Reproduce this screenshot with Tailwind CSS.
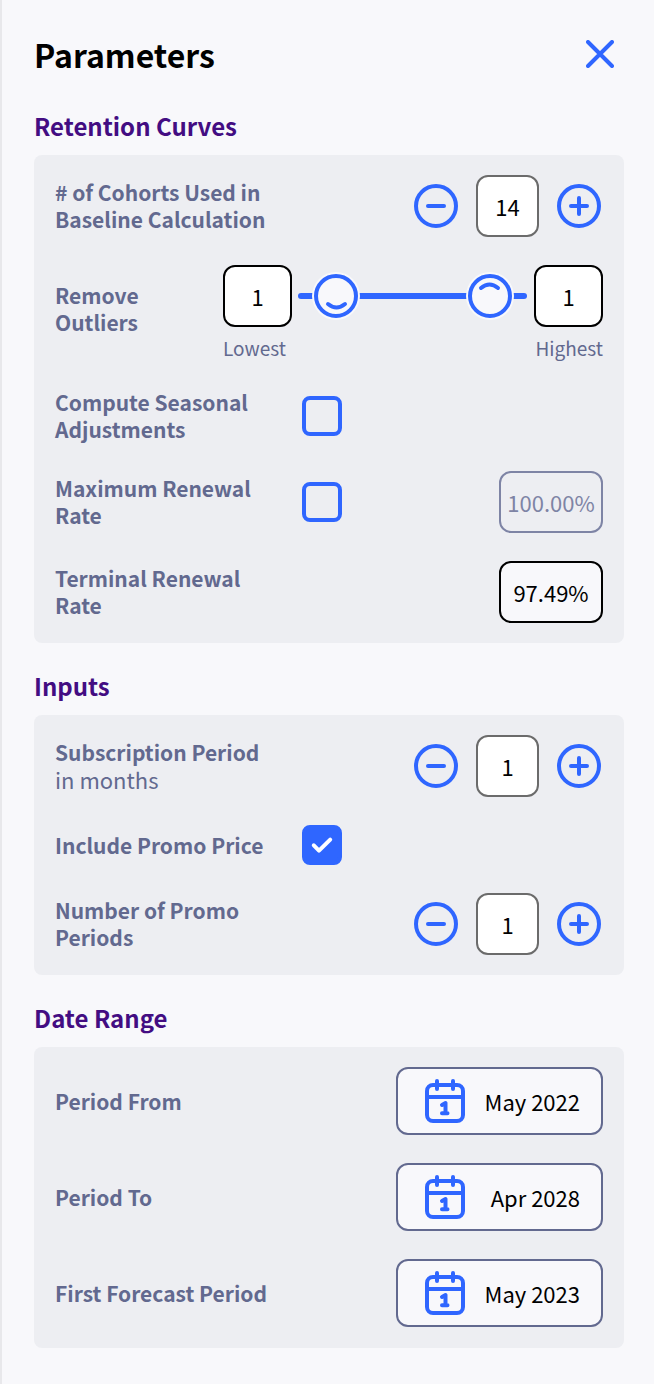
<!DOCTYPE html>
<html lang="en">
<head>
    <meta charset="UTF-8">
    <meta name="viewport" content="width=device-width, initial-scale=1.0">
    <title>Parameters</title>
    <script src="https://cdn.jsdelivr.net/npm/@tailwindcss/browser@4"></script>
</head>
<body class="bg-[#f8f8fb] font-['Noto_Sans_CJK_SC','Noto_Sans',sans-serif] text-[21px] leading-[27px] text-black">
    <!-- shared icons -->
    <svg class="hidden">
        <symbol id="minus" viewBox="0 0 44 44" fill="none" stroke="currentColor" stroke-width="4" stroke-linecap="round">
            <circle cx="22" cy="22" r="20"/>
            <path d="M14 22H30"/>
        </symbol>
        <symbol id="plus" viewBox="0 0 44 44" fill="none" stroke="currentColor" stroke-width="4" stroke-linecap="round">
            <circle cx="22" cy="22" r="20"/>
            <path d="M14 22H30M22 14V30"/>
        </symbol>
        <symbol id="check" viewBox="0 0 40 40" fill="none" stroke="currentColor" stroke-width="4" stroke-linecap="round" stroke-linejoin="round">
            <path d="M11.8 20.3L17 25.6L28.2 14.6"/>
        </symbol>
        <symbol id="calendar" viewBox="0 0 40 44" fill="none" stroke="currentColor" stroke-width="4" stroke-linecap="round" stroke-linejoin="round">
            <rect x="2" y="6" width="36" height="36" rx="6"/>
            <path d="M2 18H38" stroke-linecap="butt"/>
            <path d="M12 2V10M28 2V10"/>
            <path d="M17 26L20.5 24V34M17 34.3H22.5"/>
        </symbol>
    </svg>

    <main class="min-h-screen border-l-2 border-[#e8e8eb] pt-8 pr-[30px] pb-8 pl-8">
        <header class="flex items-start justify-between pr-[10px] mb-8">
            <h1 class="text-[32px] leading-[44px] font-bold">Parameters</h1>
            <button type="button" aria-label="Close" class="mt-2 text-[#2f66ff]">
                <svg class="size-7" viewBox="0 0 28 28" fill="none" stroke="currentColor" stroke-width="4" stroke-linecap="round"><path d="M2 2L26 26M26 2L2 26"/></svg>
            </button>
        </header>

        <section class="mb-[25px]">
            <h2 class="mb-[11px] text-[24px] leading-[36px] font-bold text-[#430d82]">Retention Curves</h2>
            <div class="flex flex-col gap-7 rounded-lg bg-[#edeef2] px-[21px] py-5">
                <div class="flex items-center justify-between">
                    <label for="cohorts" class="w-[219px] font-bold text-[#62698f]"># of Cohorts Used in Baseline Calculation</label>
                    <div class="flex items-center gap-[18px] pr-[2px]">
                        <button type="button" aria-label="Decrease" data-step="-1" class="text-[#2f66ff]"><svg class="size-11"><use href="#minus"/></svg></button>
                        <input id="cohorts" type="text" value="14" class="h-[62px] w-[63px] rounded-xl border-2 border-[#6b6b6b] bg-white text-center text-[22px]">
                        <button type="button" aria-label="Increase" data-step="1" class="text-[#2f66ff]"><svg class="size-11"><use href="#plus"/></svg></button>
                    </div>
                </div>

                <div class="flex items-start justify-between">
                    <span class="w-[120px] pt-[17px] font-bold text-[#62698f]">Remove Outliers</span>
                    <div class="flex items-start gap-[6px]">
                        <div class="flex flex-col gap-2">
                            <input id="lowest" type="text" value="1" class="h-[62px] w-[69px] rounded-xl border-2 border-black bg-white text-center text-[22px]">
                            <label for="lowest" class="w-[69px] text-[19px] leading-[26px] text-[#62698f]">Lowest</label>
                        </div>
                        <div class="relative mt-[7px] h-12 w-[230px]">
                            <svg class="size-full" viewBox="0 0 230 48" fill="none" stroke="#2f66ff" stroke-width="4" stroke-linecap="round">
                                <path d="M3 24H226" stroke-width="6"/>
                                <circle cx="38" cy="24" r="24" fill="#f8f8fb" stroke="none"/>
                                <circle cx="38" cy="24" r="20"/>
                                <path d="M30 32Q38.5 39 47 32"/>
                                <circle cx="192" cy="24" r="24" fill="#f8f8fb" stroke="none"/>
                                <circle cx="192" cy="24" r="20"/>
                                <path d="M183 16Q191.5 9 200 16"/>
                            </svg>
                            <input type="range" min="0" max="10" value="1" aria-label="Lowest outliers" class="absolute inset-y-0 left-0 w-1/2 opacity-0">
                            <input type="range" min="0" max="10" value="9" aria-label="Highest outliers" class="absolute inset-y-0 right-0 w-1/2 opacity-0">
                        </div>
                        <div class="flex flex-col items-end gap-2">
                            <input id="highest" type="text" value="1" class="h-[62px] w-[69px] rounded-xl border-2 border-black bg-white text-center text-[22px]">
                            <label for="highest" class="text-[19px] leading-[26px] text-[#62698f]">Highest</label>
                        </div>
                    </div>
                </div>

                <div class="flex items-center gap-7">
                    <label for="seasonal" class="w-[219px] font-bold text-[#62698f]">Compute Seasonal Adjustments</label>
                    <div class="grid size-10">
                        <input id="seasonal" type="checkbox" class="peer col-start-1 row-start-1 size-10 appearance-none rounded-lg border-4 border-[#2f66ff] checked:bg-[#2f66ff]">
                        <svg class="pointer-events-none invisible col-start-1 row-start-1 size-10 text-white peer-checked:visible"><use href="#check"/></svg>
                    </div>
                </div>

                <div class="flex items-center gap-7">
                    <label for="max-on" class="w-[219px] font-bold text-[#62698f]">Maximum Renewal Rate</label>
                    <div class="grid size-10">
                        <input id="max-on" type="checkbox" class="peer col-start-1 row-start-1 size-10 appearance-none rounded-lg border-4 border-[#2f66ff] checked:bg-[#2f66ff]">
                        <svg class="pointer-events-none invisible col-start-1 row-start-1 size-10 text-white peer-checked:visible"><use href="#check"/></svg>
                    </div>
                    <input id="max-rate" type="text" value="100.00%" disabled aria-label="Maximum renewal rate value" class="ml-auto h-[62px] w-[104px] rounded-xl border-2 border-[#7e84a5] text-center text-[22px] text-[#7e84a5]">
                </div>

                <div class="flex items-center justify-between">
                    <label for="terminal" class="w-[219px] font-bold text-[#62698f]">Terminal Renewal Rate</label>
                    <input id="terminal" type="text" value="97.49%" class="h-[62px] w-[104px] rounded-xl border-2 border-black bg-[#f8f8fb] text-center text-[22px]">
                </div>
            </div>
        </section>

        <section class="mb-[25px]">
            <h2 class="mb-[11px] text-[24px] leading-[36px] font-bold text-[#430d82]">Inputs</h2>
            <div class="flex flex-col gap-7 rounded-lg bg-[#edeef2] px-[21px] py-5">
                <div class="flex items-center justify-between">
                    <label for="sub-period" class="w-[219px] font-bold text-[#62698f]">Subscription Period <span class="block text-[22px] font-normal">in months</span></label>
                    <div class="flex items-center gap-[18px] pr-[2px]">
                        <button type="button" aria-label="Decrease" data-step="-1" class="text-[#2f66ff]"><svg class="size-11"><use href="#minus"/></svg></button>
                        <input id="sub-period" type="text" value="1" class="h-[62px] w-[63px] rounded-xl border-2 border-[#6b6b6b] bg-white text-center text-[22px]">
                        <button type="button" aria-label="Increase" data-step="1" class="text-[#2f66ff]"><svg class="size-11"><use href="#plus"/></svg></button>
                    </div>
                </div>

                <div class="flex items-center gap-7">
                    <label for="promo" class="w-[219px] font-bold text-[#62698f]">Include Promo Price</label>
                    <div class="grid size-10">
                        <input id="promo" type="checkbox" checked class="peer col-start-1 row-start-1 size-10 appearance-none rounded-lg border-4 border-[#2f66ff] checked:bg-[#2f66ff]">
                        <svg class="pointer-events-none invisible col-start-1 row-start-1 size-10 text-white peer-checked:visible"><use href="#check"/></svg>
                    </div>
                </div>

                <div class="flex items-center justify-between">
                    <label for="promo-periods" class="w-[219px] font-bold text-[#62698f]">Number of Promo Periods</label>
                    <div class="flex items-center gap-[18px] pr-[2px]">
                        <button type="button" aria-label="Decrease" data-step="-1" class="text-[#2f66ff]"><svg class="size-11"><use href="#minus"/></svg></button>
                        <input id="promo-periods" type="text" value="1" class="h-[62px] w-[63px] rounded-xl border-2 border-[#6b6b6b] bg-white text-center text-[22px]">
                        <button type="button" aria-label="Increase" data-step="1" class="text-[#2f66ff]"><svg class="size-11"><use href="#plus"/></svg></button>
                    </div>
                </div>
            </div>
        </section>

        <section>
            <h2 class="mb-[11px] text-[24px] leading-[36px] font-bold text-[#430d82]">Date Range</h2>
            <div class="flex flex-col gap-7 rounded-lg bg-[#edeef2] px-[21px] pt-5 pb-[21px]">
                <div class="flex items-center justify-between">
                    <label for="from" class="font-bold text-[#62698f]">Period From</label>
                    <button id="from" type="button" class="flex h-[68px] w-[207px] items-center justify-between rounded-xl border-2 border-[#62698f] bg-[#f8f8fb] pr-[21px] pl-[27px] text-[22px]">
                        <svg class="h-11 w-10 text-[#2f66ff]"><use href="#calendar"/></svg>
                        <span>May 2022</span>
                    </button>
                </div>
                <div class="flex items-center justify-between">
                    <label for="to" class="font-bold text-[#62698f]">Period To</label>
                    <button id="to" type="button" class="flex h-[68px] w-[207px] items-center justify-between rounded-xl border-2 border-[#62698f] bg-[#f8f8fb] pr-[21px] pl-[27px] text-[22px]">
                        <svg class="h-11 w-10 text-[#2f66ff]"><use href="#calendar"/></svg>
                        <span>Apr 2028</span>
                    </button>
                </div>
                <div class="flex items-center justify-between">
                    <label for="forecast" class="font-bold text-[#62698f]">First Forecast Period</label>
                    <button id="forecast" type="button" class="flex h-[68px] w-[207px] items-center justify-between rounded-xl border-2 border-[#62698f] bg-[#f8f8fb] pr-[21px] pl-[27px] text-[22px]">
                        <svg class="h-11 w-10 text-[#2f66ff]"><use href="#calendar"/></svg>
                        <span>May 2023</span>
                    </button>
                </div>
            </div>
        </section>
    </main>

    <script>
        document.querySelectorAll('[data-step]').forEach((button) => {
            button.addEventListener('click', () => {
                const input = button.parentElement.querySelector('input');
                input.value = Math.max(0, Number(input.value) + Number(button.dataset.step));
            });
        });

        document.getElementById('max-on').addEventListener('change', (e) => {
            document.getElementById('max-rate').disabled = !e.target.checked;
        });
    </script>
</body>
</html>
